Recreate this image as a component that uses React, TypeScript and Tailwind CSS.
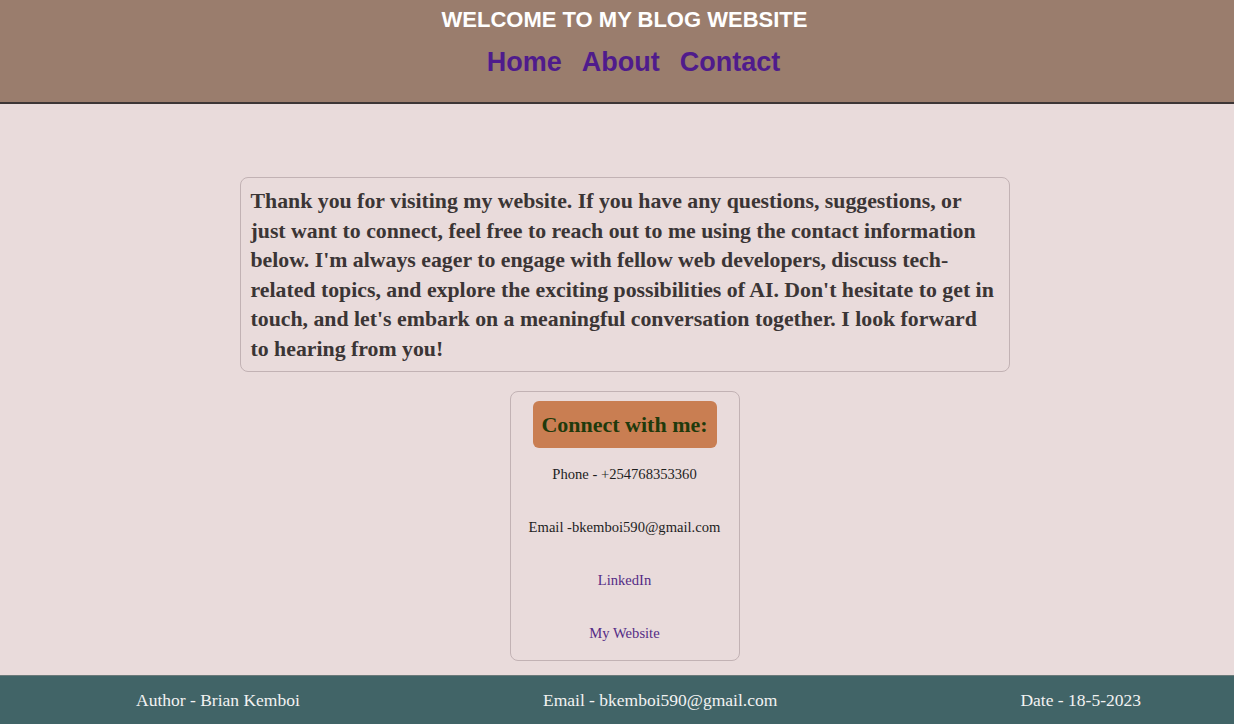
export default function App() {
  const serif = { fontFamily: '"Liberation Serif", "Times New Roman", serif' };
  return (
    <div className="flex h-[724px] w-[1234px] flex-col overflow-hidden bg-[#e9dbdb]">
      <header
        className="flex h-[104px] shrink-0 flex-col items-center border-b-2 border-[#3d3636] bg-[#9a7d6d] pl-[15px]"
        style={{ fontFamily: '"Liberation Sans", Arial, sans-serif' }}
      >
        <h1 className="mt-[7px] text-[22px] font-bold leading-[26px] text-white">WELCOME TO MY BLOG WEBSITE</h1>
        <nav className="mt-[13px] flex gap-[20px] pl-[18px] text-[27px] font-bold leading-[32px] text-[#4f1b8c]">
          <a>Home</a>
          <a>About</a>
          <a>Contact</a>
        </nav>
      </header>
      <main className="flex flex-1 flex-col items-center pl-[15px] pt-[73px]" style={serif}>
        <div className="w-[770px] rounded-[8px] border border-[#c2b2b4] pb-[7px] pl-[10px] pr-[14px] pt-[9px] text-[21.8px] font-bold leading-[29.5px] text-[#3b3535]">
          Thank you for visiting my website. If you have any questions, suggestions, or just want to connect, feel free to reach out to me using the contact information below. I'm always eager to engage with fellow web developers, discuss tech-related topics, and explore the exciting possibilities of AI. Don't hesitate to get in touch, and let's embark on a meaningful conversation together. I look forward to hearing from you!
        </div>
        <div className="mt-[19px] flex w-[230px] flex-col items-center rounded-[8px] border border-[#c2b2b4] pt-[9px]">
          <div className="flex h-[47px] w-[184px] items-center justify-center rounded-[6px] bg-[#c97e52] text-[22px] font-bold text-[#1f3a0c]">
            Connect with me:
          </div>
          <div className="flex h-[53px] items-center text-[14.6px] text-[#1e1e1e]">Phone - +254768353360</div>
          <div className="flex h-[53px] items-center text-[14.6px] text-[#1e1e1e]">Email -bkemboi590@gmail.com</div>
          <a className="flex h-[53px] items-center text-[14.6px] text-[#552c86]">LinkedIn</a>
          <a className="flex h-[53px] items-center text-[14.6px] text-[#552c86]">My Website</a>
        </div>
      </main>
      <footer
        className="flex h-[49px] shrink-0 items-center justify-between border-t border-[#6b7a7a] bg-[#416467] pl-[136px] pr-[93px] text-[17.5px] text-[#f2f2f2]"
        style={serif}
      >
        <span>Author - Brian Kemboi</span>
        <span>Email - bkemboi590@gmail.com</span>
        <span>Date - 18-5-2023</span>
      </footer>
    </div>
  );
}
